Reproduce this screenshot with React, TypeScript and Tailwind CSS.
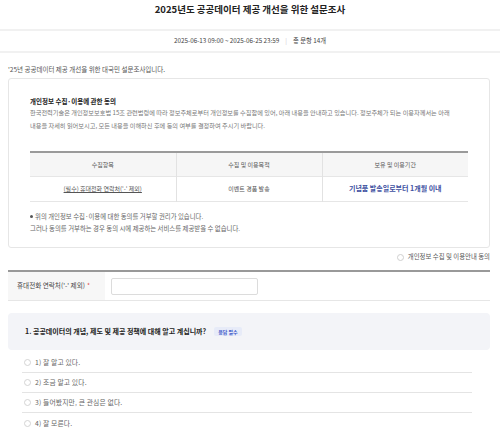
import { type FC } from "react";

const options = [
  "1) 잘 알고 있다.",
  "2) 조금 알고 있다.",
  "3) 들어봤지만, 큰 관심은 없다.",
  "4) 잘 모른다.",
];

const ConsentTable: FC = () => {
  return (
    <table className="mt-[19px] w-full table-fixed border-collapse text-[6px] text-[#555]">
      <thead>
        <tr className="h-[24px] border-t-2 border-[#9a9a9a] bg-[#f6f6f6]">
          <th className="border-r border-[#e2e2e2] font-normal">수집항목</th>
          <th className="border-r border-[#e2e2e2] font-normal">수집 및 이용목적</th>
          <th className="font-normal">보유 및 이용기간</th>
        </tr>
      </thead>
      <tbody>
        <tr className="h-[25px] border-y border-[#e6e6e6]">
          <td className="border-r border-[#e2e2e2] text-center underline">
            (필수) 휴대전화 연락처(&apos;-&apos; 제외)
          </td>
          <td className="border-r border-[#e2e2e2] text-center">이벤트 경품 발송</td>
          <td className="text-center text-[7px] font-bold text-[#3d4f9f]">
            기념품 발송일로부터 1개월 이내
          </td>
        </tr>
      </tbody>
    </table>
  );
};

const ConsentBox: FC = () => {
  return (
    <section className="mt-[4px] h-[170px] rounded-[3px] border border-[#e6e6e6] px-[21px] pt-[17px]">
      <h2 className="text-[6.5px] font-bold leading-[10px] text-[#222]">
        개인정보 수집·이용에 관한 동의
      </h2>
      <p className="whitespace-nowrap text-[6.2px] leading-[13px] text-[#777]">
        한국전력기술은 개인정보보호법 15조 관련법령에 따라 정보주체로부터 개인정보를 수집함에 있어, 아래 내용을
        안내하고 있습니다. 정보주체가 되는 이용자께서는 아래
        <br />
        내용을 자세히 읽어보시고, 모든 내용을 이해하신 후에 동의 여부를 결정하여 주시기 바랍니다.
      </p>
      <ConsentTable />
      <ul className="mt-[9px] text-[6.4px] leading-[12px] text-[#666]">
        <li className="flex items-center gap-[2px]">
          <span className="size-[3px] rounded-full bg-[#555]" />
          위의 개인정보 수집·이용에 대한 동의를 거부할 권리가 있습니다.
        </li>
        <li>그러나 동의를 거부하는 경우 동의 시에 제공하는 서비스를 제공받을 수 없습니다.</li>
      </ul>
    </section>
  );
};

export default function App() {
  return (
    <div className="h-[438px] w-[500px] overflow-hidden bg-white font-['Noto_Sans_CJK_KR','Noto_Sans',sans-serif]">
      <h1 className="h-[29px] text-center text-[9.5px] font-bold leading-[18px] text-[#222]">
        2025년도 공공데이터 제공 개선을 위한 설문조사
      </h1>
      <div className="flex h-[24px] items-center justify-center border-y-2 border-[#f1f1f1] text-[6.3px] text-[#444]">
        <span>2025-06-13 09:00 ~ 2025-06-25 23:59</span>
        <span className="mx-[6px] text-[#ccc]">|</span>
        <span>총 문항 14개</span>
      </div>

      <main className="pl-[8px] pr-[10px]">
        <p className="mt-[11px] text-[6.5px] leading-[10px] text-[#555]">
          &apos;25년 공공데이터 제공 개선을 위한 대국민 설문조사입니다.
        </p>

        <ConsentBox />

        <label className="mt-[4px] flex h-[10px] items-center justify-end gap-[4px] text-[6.4px] text-[#555]">
          <span className="size-[7px] rounded-full border border-[#cfcfcf] bg-white" />
          개인정보 수집 및 이용안내 동의
        </label>

        <div className="mt-[8px] flex h-[31px] border-t-2 border-b border-t-[#999] border-b-[#e6e6e6]">
          <div className="flex w-[97px] items-center bg-[#f7f7f7] pl-[9px] text-[6.6px] text-[#444]">
            휴대전화 연락처(&apos;-&apos; 제외)<span className="ml-[2px] text-[#e14b4b]">*</span>
          </div>
          <div className="flex items-center pl-[6px]">
            <input className="h-[17px] w-[147px] rounded-[2px] border border-[#dcdcdc] bg-white outline-none" />
          </div>
        </div>

        <div className="mt-[12px] flex h-[37px] items-center gap-[8px] rounded-[4px] bg-[#f3f4f8] pl-[17px] text-[7px] font-bold text-[#222]">
          1. 공공데이터의 개념, 제도 및 제공 정책에 대해 알고 계십니까?
          <span className="rounded-[2px] bg-[#e7ebf8] px-[4px] py-[1px] text-[5px] text-[#3a56c8]">응답 필수</span>
        </div>

        <ul className="ml-[14px] mr-[18px] mt-[3px]">
          {options.map((o, i) => (
            <li
              key={o}
              className={
                i < options.length - 1
                  ? "flex h-[20px] items-center gap-[4px] border-b border-[#e4e4e4] pl-[2px] text-[6.8px] tracking-[0.02em] text-[#666]"
                  : "flex h-[20px] items-center gap-[4px] pl-[2px] text-[6.8px] tracking-[0.02em] text-[#666]"
              }
            >
              <span className="size-[7px] rounded-full border border-[#d4d4d4]" />
              {o}
            </li>
          ))}
        </ul>
      </main>
    </div>
  );
}
